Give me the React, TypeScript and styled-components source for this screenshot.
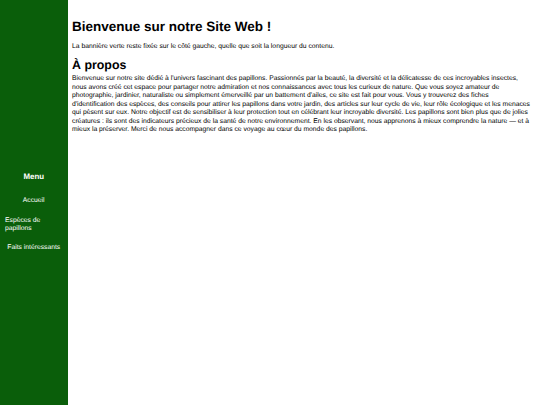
import React from "react";
import styled, { createGlobalStyle } from "styled-components";

const Global = createGlobalStyle`
  html, body { margin: 0; padding: 0; }
  body {
    font-family: "Liberation Sans", Arial, sans-serif;
    background: #ffffff;
    color: #000000;
    text-rendering: geometricPrecision;
  }
`;

const Page = styled.div`
  display: flex;
  min-height: 405px;
`;

const Sidebar = styled.aside`
  position: fixed;
  top: 0;
  left: 0;
  bottom: 0;
  width: 67.5px;
  background: #0a5e0a;
  color: #ffffff;
  display: flex;
  flex-direction: column;
  justify-content: center;
  box-sizing: border-box;
  padding: 25px 0 0;
`;

const MenuTitle = styled.h3`
  margin: 0 0 10px;
  font-size: 7.9px;
  line-height: 9.9px;
  font-weight: bold;
  text-align: center;
`;

const NavList = styled.ul`
  list-style: none;
  margin: 0;
  padding: 0;
  display: flex;
  flex-direction: column;
  gap: 1px;
`;

const NavItem = styled.li`
  display: flex;
  justify-content: center;
  margin: 0;
`;

const NavLink = styled.a`
  display: block;
  text-align: left;
  padding: 5px;
  color: #ffffff;
  text-decoration: none;
  font-size: 6.75px;
  line-height: 8.44px;
`;

const Main = styled.main`
  margin-left: 67.5px;
  padding: 9px 8px 8px 4.5px;
  flex: 1;
`;

const Title = styled.h1`
  font-size: 13.5px;
  line-height: normal;
  font-weight: bold;
  margin: 9.5px 0 9px;
`;

const Text = styled.p`
  font-size: 6.75px;
  line-height: 8.44px;
  margin: 0;
`;

const Subtitle = styled.h2`
  font-size: 12.4px;
  line-height: normal;
  font-weight: bold;
  margin: 7px 0 3.5px;
`;

export default function App() {
  return (
    <>
      <Global />
      <Page>
        <Sidebar>
          <MenuTitle>Menu</MenuTitle>
          <NavList>
            <NavItem><NavLink href="#">Accueil</NavLink></NavItem>
            <NavItem><NavLink href="#">Espèces de papillons</NavLink></NavItem>
            <NavItem><NavLink href="#">Faits intéressants</NavLink></NavItem>
          </NavList>
        </Sidebar>
        <Main>
          <Title>Bienvenue sur notre Site Web !</Title>
          <Text>La bannière verte reste fixée sur le côté gauche, quelle que soit la longueur du contenu.</Text>
          <Subtitle>À propos</Subtitle>
          <Text>
            Bienvenue sur notre site dédié à l'univers fascinant des papillons. Passionnés par la beauté, la diversité et la délicatesse de ces incroyables insectes, nous avons créé cet espace pour partager notre admiration et nos connaissances avec tous les curieux de nature. Que vous soyez amateur de photographie, jardinier, naturaliste ou simplement émerveillé par un battement d'ailes, ce site est fait pour vous. Vous y trouverez des fiches d'identification des espèces, des conseils pour attirer les papillons dans votre jardin, des articles sur leur cycle de vie, leur rôle écologique et les menaces qui pèsent sur eux. Notre objectif est de sensibiliser à leur protection tout en célébrant leur incroyable diversité. Les papillons sont bien plus que de jolies créatures : ils sont des indicateurs précieux de la santé de notre environnement. En les observant, nous apprenons à mieux comprendre la nature — et à mieux la préserver. Merci de nous accompagner dans ce voyage au cœur du monde des papillons.
          </Text>
        </Main>
      </Page>
    </>
  );
}
